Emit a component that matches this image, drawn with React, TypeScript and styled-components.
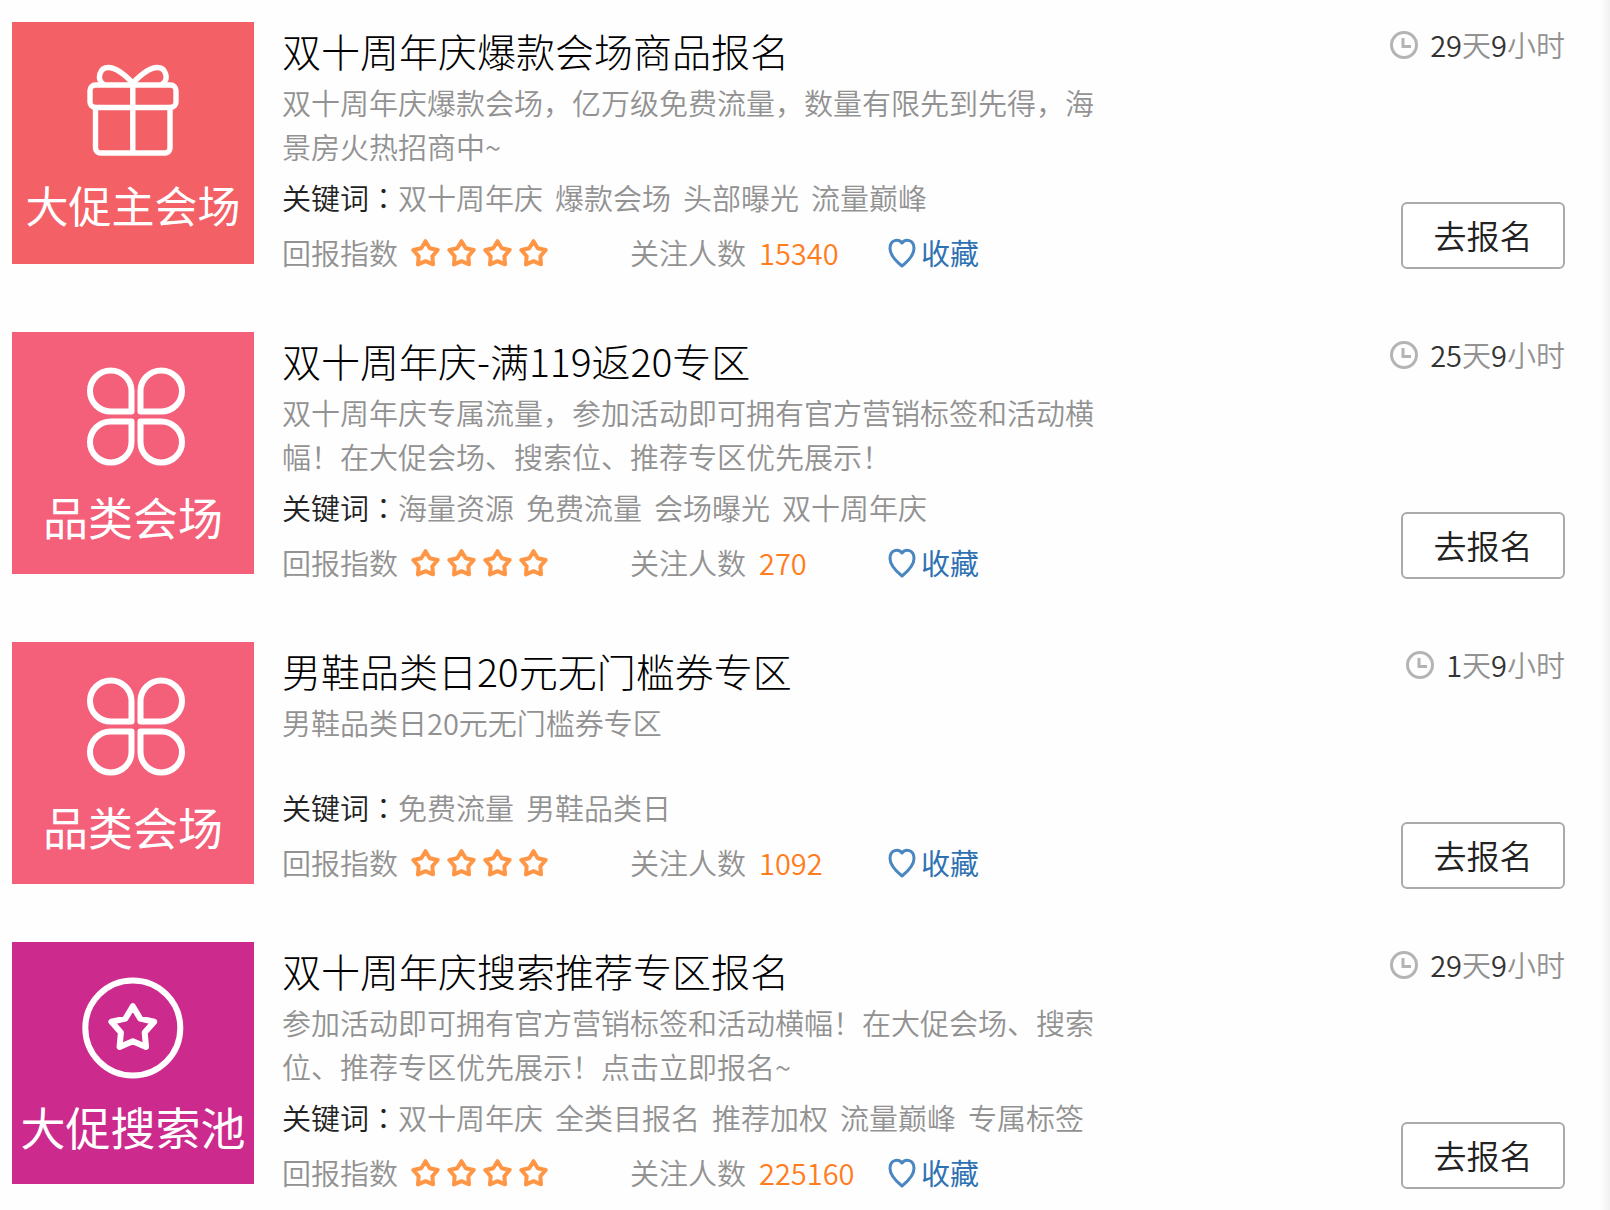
import React from 'react';
import styled, { createGlobalStyle } from 'styled-components';

const GlobalStyle = createGlobalStyle`
  *, *::before, *::after { box-sizing: border-box; }
  body {
    margin: 0;
    min-height: 100vh;
    background: linear-gradient(to left, #f1f1f1, #fefefe 10px);
    font-family: "Noto Sans CJK SC", sans-serif;
    font-size: 29px;
    line-height: 44px;
    font-weight: 350;
    color: #929292;
  }
  button { font-family: inherit; cursor: pointer; }
`;

const List = styled.main`
  display: flex;
  flex-direction: column;
  gap: 53px;
  padding: 22px 45px 10px 12px;
`;

const Row = styled.article`
  display: flex;
  align-items: flex-start;
`;

const Tile = styled.div<{ $color: string }>`
  flex: none;
  display: flex;
  flex-direction: column;
  align-items: center;
  width: 242px;
  height: 242px;
  padding-top: 32px;
  background: ${(p) => p.$color};
  color: #fff;
`;

const TileIcon = styled.svg`
  width: 110px;
  height: 110px;
  fill: none;
  stroke: #fff;
  stroke-linejoin: round;
  stroke-linecap: round;
`;

const TileLabel = styled.span<{ $compact?: boolean }>`
  margin-top: ${(p) => (p.$compact ? 12 : 15)}px;
  font-size: ${(p) => (p.$compact ? 43 : 45)}px;
  line-height: 56px;
  font-weight: 400;
  white-space: nowrap;
`;

const Body = styled.div`
  flex: 1;
  min-width: 0;
  padding: 4px 28px 5px;
`;

const Title = styled.h2`
  margin: 0 0 6px;
  font-size: 39px;
  line-height: 48px;
  font-weight: 300;
  color: #000;
`;

const Description = styled.p`
  margin: 0;
  max-width: 814px;
  min-height: 78px;
`;

const Keywords = styled.div`
  display: flex;
  margin-top: 7px;
`;

const KeywordLabel = styled.span`
  color: #222;
`;

const Colon = styled.span`
  font-family: "Noto Sans CJK JP", sans-serif;
  color: #222;
`;

const KeywordList = styled.ul`
  display: flex;
  flex-wrap: wrap;
  gap: 0 12px;
  margin: 0;
  padding: 0;
  list-style: none;
`;

const Stats = styled.div`
  display: grid;
  grid-template-columns: 348px 258px auto;
  justify-content: start;
  margin-top: 11px;
`;

const Stat = styled.div`
  display: flex;
  align-items: center;
  gap: 13px;
`;

const Stars = styled.span`
  display: flex;
  gap: 7px;
`;

const StarIcon = styled.svg`
  width: 29px;
  height: 30px;
  fill: none;
  stroke: #ff9645;
  stroke-width: 4;
  stroke-linejoin: round;
`;

const Count = styled.span`
  color: #ff7d1f;
`;

const Favorite = styled.button`
  display: flex;
  align-items: center;
  gap: 5px;
  padding: 0;
  border: 0;
  background: none;
  font-size: 29px;
  line-height: 44px;
  font-weight: 400;
  color: #2f72b3;
`;

const HeartIcon = styled.svg`
  width: 28px;
  height: 32px;
  fill: none;
  stroke: #4a86bf;
  stroke-width: 3;
  stroke-linejoin: round;
`;

const Side = styled.div`
  flex: none;
  display: flex;
  flex-direction: column;
  align-items: flex-end;
  gap: 136px;
`;

const Remaining = styled.div`
  display: flex;
  align-items: center;
  gap: 12px;
`;

const ClockIcon = styled.svg`
  width: 28px;
  height: 30px;
  fill: none;
  stroke: #b4b4b4;
  stroke-width: 3;
`;

const Digits = styled.span`
  color: #333;
`;

const Apply = styled.button`
  width: 164px;
  height: 67px;
  padding: 0 0 2px;
  border: 2px solid #aaa;
  border-radius: 6px;
  background: #fff;
  font-size: 33px;
  line-height: 44px;
  font-weight: 350;
  color: #222;
`;

const starPoints = (cx: number, cy: number, outer: number, inner: number) =>
  Array.from({ length: 10 }, (_, i) => {
    const r = i % 2 ? inner : outer;
    const a = (Math.PI * i) / 5 - Math.PI / 2;
    return `${(cx + r * Math.cos(a)).toFixed(2)},${(cy + r * Math.sin(a)).toFixed(2)}`;
  }).join(' ');

const PETAL = 'M53.5 47.5H32.75A20.75 20.5 0 1 1 53.5 27Z';

type IconName = 'gift' | 'clover' | 'star';

const icons: Record<IconName, React.ReactNode> = {
  gift: (
    <g strokeWidth="5.4">
      <rect x="12" y="31" width="86" height="22.5" rx="5.5" />
      <path d="M17.5 53.5V94a5 5 0 0 0 5 5h64.5a5 5 0 0 0 5-5V53.5M54.8 31V99" />
      <path d="M54.8 29C48 22 38 13.5 30.5 13.5C21.5 13.5 18.5 25 25 30M54.8 29C61.6 22 71.6 13.5 79.1 13.5C88.1 13.5 91.1 25 84.6 30" />
    </g>
  ),
  clover: (
    <g strokeWidth="6">
      <path d={PETAL} />
      <path d={PETAL} transform="translate(116 0) scale(-1 1)" />
      <path d={PETAL} transform="translate(0 105) scale(1 -1)" />
      <path d={PETAL} transform="translate(116 105) scale(-1 -1)" />
    </g>
  ),
  star: (
    <g strokeWidth="6">
      <circle cx="54.8" cy="54" r="47.5" />
      <polygon points={starPoints(54.8, 54.7, 22.5, 12.5)} />
    </g>
  ),
};

type Activity = {
  tile: string;
  color: string;
  compactLabel?: boolean;
  icon: IconName;
  title: string;
  description: string;
  keywords: string[];
  followers: number;
  days: number;
  hours: number;
};

const activities: Activity[] = [
  {
    tile: '大促主会场',
    color: '#f36065',
    compactLabel: true,
    icon: 'gift',
    title: '双十周年庆爆款会场商品报名',
    description: '双十周年庆爆款会场，亿万级免费流量，数量有限先到先得，海景房火热招商中~',
    keywords: ['双十周年庆', '爆款会场', '头部曝光', '流量巅峰'],
    followers: 15340,
    days: 29,
    hours: 9,
  },
  {
    tile: '品类会场',
    color: '#f4607a',
    icon: 'clover',
    title: '双十周年庆-满119返20专区',
    description: '双十周年庆专属流量，参加活动即可拥有官方营销标签和活动横幅！在大促会场、搜索位、推荐专区优先展示！',
    keywords: ['海量资源', '免费流量', '会场曝光', '双十周年庆'],
    followers: 270,
    days: 25,
    hours: 9,
  },
  {
    tile: '品类会场',
    color: '#f4607a',
    icon: 'clover',
    title: '男鞋品类日20元无门槛券专区',
    description: '男鞋品类日20元无门槛券专区',
    keywords: ['免费流量', '男鞋品类日'],
    followers: 1092,
    days: 1,
    hours: 9,
  },
  {
    tile: '大促搜索池',
    color: '#cd2a8e',
    icon: 'star',
    title: '双十周年庆搜索推荐专区报名',
    description: '参加活动即可拥有官方营销标签和活动横幅！在大促会场、搜索位、推荐专区优先展示！点击立即报名~',
    keywords: ['双十周年庆', '全类目报名', '推荐加权', '流量巅峰', '专属标签'],
    followers: 225160,
    days: 29,
    hours: 9,
  },
];

const ActivityRow = ({ item }: { item: Activity }) => (
  <Row>
    <Tile $color={item.color}>
      <TileIcon viewBox="0 0 110 110" aria-hidden="true">
        {icons[item.icon]}
      </TileIcon>
      <TileLabel $compact={item.compactLabel}>{item.tile}</TileLabel>
    </Tile>
    <Body>
      <Title>{item.title}</Title>
      <Description>{item.description}</Description>
      <Keywords>
        <KeywordLabel>关键词</KeywordLabel>
        <Colon>：</Colon>
        <KeywordList>
          {item.keywords.map((word) => (
            <li key={word}>{word}</li>
          ))}
        </KeywordList>
      </Keywords>
      <Stats>
        <Stat>
          <span>回报指数</span>
          <Stars>
            {[0, 1, 2, 3].map((n) => (
              <StarIcon key={n} viewBox="0 0 29 30" aria-hidden="true">
                <polygon points={starPoints(14.5, 17, 12.8, 7.2)} />
              </StarIcon>
            ))}
          </Stars>
        </Stat>
        <Stat>
          <span>关注人数</span>
          <Count>{item.followers}</Count>
        </Stat>
        <Favorite type="button">
          <HeartIcon viewBox="0 0 28 32" aria-hidden="true">
            <path d="M14 7C10.5 2.5 2 3.5 2 12.5C2 19 6.5 24 14 30C21.5 24 26 19 26 12.5C26 3.5 17.5 2.5 14 7Z" />
          </HeartIcon>
          收藏
        </Favorite>
      </Stats>
    </Body>
    <Side>
      <Remaining>
        <ClockIcon viewBox="0 0 28 30" aria-hidden="true">
          <circle cx="14" cy="16" r="12.5" />
          <path d="M13 9V17.5H21" />
        </ClockIcon>
        <span>
          <Digits>{item.days}</Digits>天<Digits>{item.hours}</Digits>小时
        </span>
      </Remaining>
      <Apply type="button">去报名</Apply>
    </Side>
  </Row>
);

export default function App() {
  return (
    <>
      <GlobalStyle />
      <List>
        {activities.map((item) => (
          <ActivityRow key={item.title} item={item} />
        ))}
      </List>
    </>
  );
}
